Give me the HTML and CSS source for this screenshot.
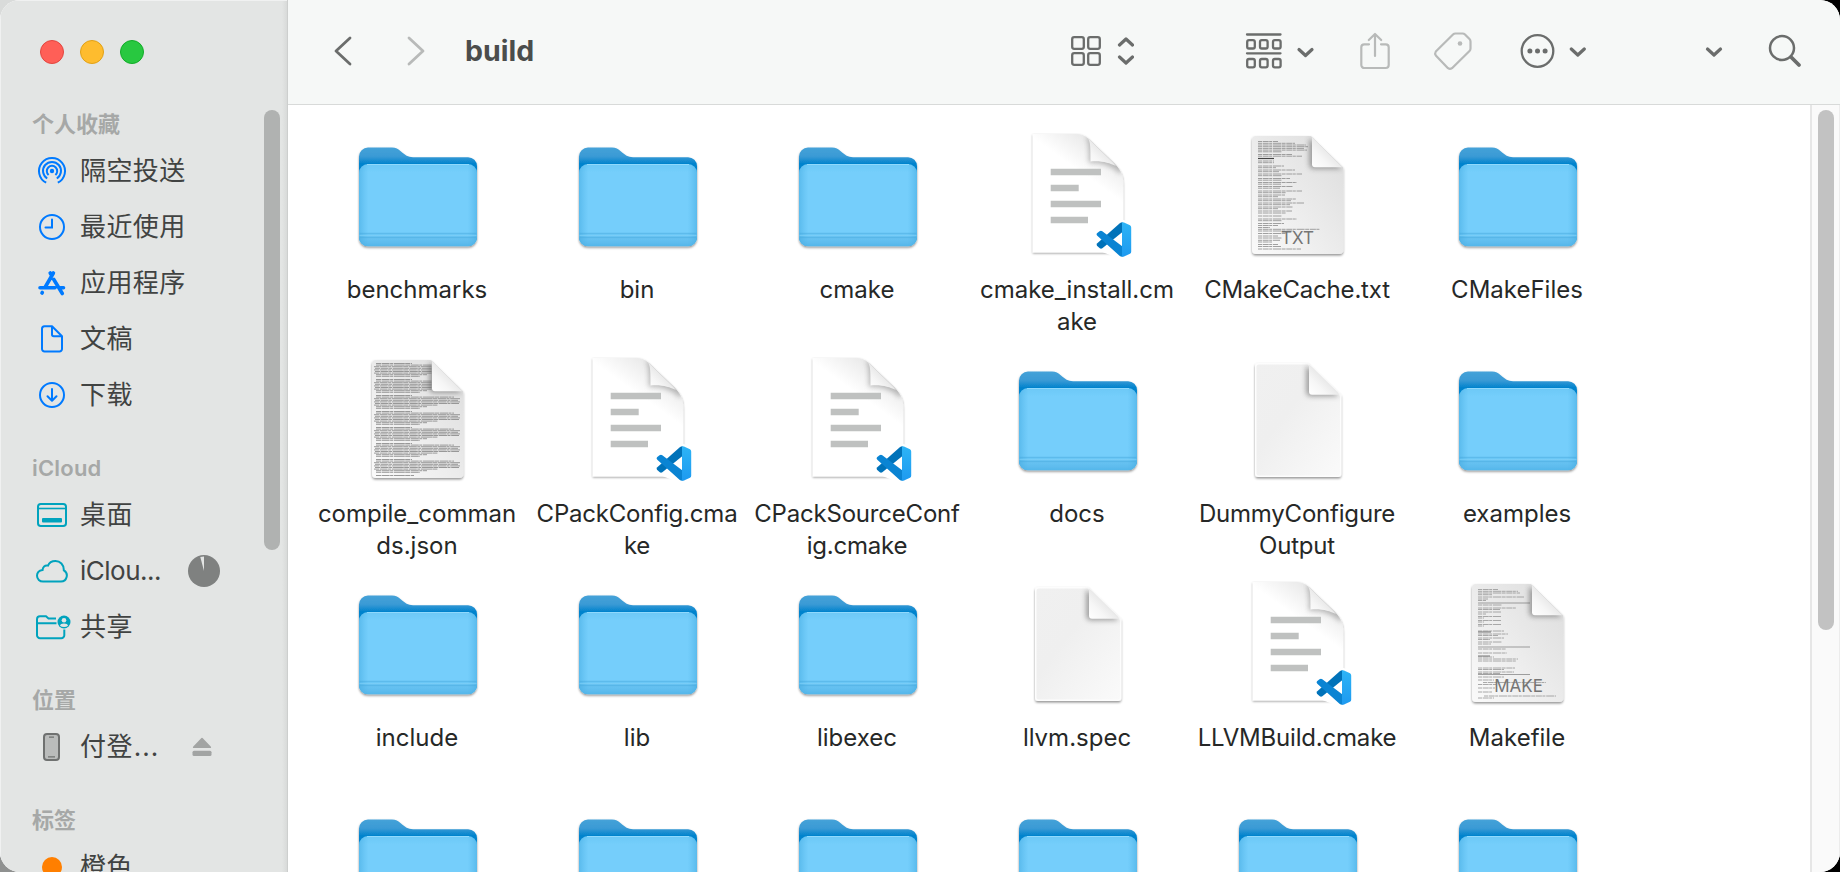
FILE: index.html
```html
<!DOCTYPE html>
<html lang="zh-CN">
<head>
<meta charset="utf-8">
<title>build</title>
<link rel="stylesheet" href="styles.css">
</head>
<body>
<svg class="defs" width="0" height="0" aria-hidden="true">
  <defs>
    <linearGradient id="gBack" x1="0" y1="0" x2="0" y2="1"><stop offset="0" stop-color="#45a2d8"/><stop offset=".09" stop-color="#3a9ad5"/><stop offset=".165" stop-color="#0083cd"/><stop offset="1" stop-color="#0083cd"/></linearGradient>
    <linearGradient id="gFront" x1="0" y1="0" x2="0" y2="1"><stop offset="0" stop-color="#6cc8f6"/><stop offset=".1" stop-color="#74cefb"/><stop offset=".84" stop-color="#74cefb"/><stop offset=".9" stop-color="#68c3f2"/><stop offset="1" stop-color="#55b6ea"/></linearGradient>
    <linearGradient id="gSide" x1="0" y1="0" x2="1" y2="0"><stop offset="0" stop-color="#3ea7de" stop-opacity=".5"/><stop offset=".08" stop-color="#4ab0e6" stop-opacity="0"/><stop offset=".92" stop-color="#4ab0e6" stop-opacity="0"/><stop offset="1" stop-color="#3ea7de" stop-opacity=".5"/></linearGradient>
    <linearGradient id="gDoc" x1="0" y1="0" x2="1" y2="1"><stop offset="0" stop-color="#f0f0f0"/><stop offset=".4" stop-color="#efefef"/><stop offset="1" stop-color="#fafafa"/></linearGradient>
    <linearGradient id="gText" x1="0" y1="1" x2="1" y2="0"><stop offset="0" stop-color="#fafafa"/><stop offset=".6" stop-color="#e8e8e8"/><stop offset="1" stop-color="#dcdcdc"/></linearGradient>
    <linearGradient id="gCurl" x1="0" y1="1" x2=".6" y2=".4"><stop offset="0" stop-color="#fff"/><stop offset=".5" stop-color="#f6f6f6"/><stop offset="1" stop-color="#e4e4e4"/></linearGradient>
    <linearGradient id="gPage" x1=".2" y1="1" x2=".75" y2="0"><stop offset="0" stop-color="#fff"/><stop offset=".66" stop-color="#fff"/><stop offset="1" stop-color="#e2e2e2"/></linearGradient>
    <linearGradient id="gCode" x1="0" y1="0" x2="0" y2="1"><stop offset="0" stop-color="#2db4f6"/><stop offset="1" stop-color="#1e9af0"/></linearGradient>
    <filter id="fShadow" x="-10%" y="-10%" width="120%" height="125%"><feDropShadow dx="0" dy="1.5" stdDeviation="1.2" flood-color="#000" flood-opacity=".42"/></filter>
    <filter id="fSoft" x="-10%" y="-10%" width="120%" height="125%"><feDropShadow dx="0" dy="1" stdDeviation="1" flood-color="#000" flood-opacity=".4"/></filter>
    <filter id="fBlur" x="-40%" y="-40%" width="180%" height="180%"><feGaussianBlur stdDeviation="2.6"/></filter>
    <clipPath id="cDoc"><path d="M22 6H77L109 37.500V120a4 4 0 0 1-4 4H22a4 4 0 0 1-4-4V10a4 4 0 0 1 4-4Z"/></clipPath>
    <clipPath id="cBlank"><path d="M25 9H74L107 41V120a3 3 0 0 1-3 3H24a3 3 0 0 1-3-3V12a3 3 0 0 1 4-3Z"/></clipPath>
    <clipPath id="cPage"><path d="M18.700 4H62C70 4 74 8 78 12L100 33C106 39 109.300 44 109.300 54V122.500H18.700Z"/></clipPath>
    <clipPath id="cLines"><path d="M18 6H77.500V37.500H109V124H18Z"/></clipPath>

    <symbol id="folder" viewBox="0 0 128 128">
      <g filter="url(#fShadow)">
        <path fill="url(#gBack)" d="M5 26.500a9 9 0 0 1 9-9H38c4 0 6 1.500 9 4C51 25 54 27.200 59 27.200H114a9 9 0 0 1 9 9V107a9 9 0 0 1-9 9H14a9 9 0 0 1-9-9Z"/>
        <rect x="5" y="34" width="118" height="82.300" rx="9" fill="url(#gFront)"/>
      </g>
      <rect x="5" y="34" width="118" height="82.300" rx="9" fill="url(#gSide)"/>
      <path d="M13 34.500H115" stroke="#8fd9fd" stroke-width="1"/>
      <path d="M5.500 103.500H122.500M5.500 107.500H122.500" stroke="#48aadf" stroke-width="1.300" opacity=".5"/>
      <path d="M5.500 105.500H122.500" stroke="#7fd0f7" stroke-width="1" opacity=".6"/>
    </symbol>

    <symbol id="code-page" viewBox="0 0 128 128">
      <path filter="url(#fSoft)" fill="url(#gPage)" d="M18.700 4H62C70 4 74 8 78 12L100 33C106 39 109.300 44 109.300 54V122.500H18.700Z"/>
      <g clip-path="url(#cPage)"><path filter="url(#fBlur)" fill="#888" opacity=".55" d="M72 6C75 12 75 20 75 33C88 32 98 36 106 44L110 36L90 12Z"/></g>
      <path fill="url(#gCurl)" d="M74 8.500C76.500 12 76.500 18 76.500 31.500C88 30.500 95 33 102 36L99 32.500L78.500 12.500Z"/>
      <path fill="#bfc1c0" d="M36.700 38.700H87V45.300H36.700ZM36.700 54.700H64.700V61.300H36.700ZM36.700 70.700H87V77.300H36.700ZM36.700 86.700H74V93.300H36.700Z"/>
      <path fill="#fff" stroke="#fff" stroke-width="5.500" stroke-linejoin="round" d="M82.500 103L88 101L108 92.300L117 95.500V123L108 126.700L88 119L82.500 115Z"/>
      <path fill="#0072b9" d="M108.500 92.300V102L88.300 118.200Q87 119.200 85.500 118L83 115.800Q82 114.500 83.300 113.200L105.500 93.500Q107 92.300 108.500 92.300Z"/>
      <path fill="#0a84d3" d="M108.500 126.700V116.500L88.300 101.300Q87 100.300 85.500 101.300L83 103.300Q82 104.500 83.300 105.800L105.500 125.800Q107 126.900 108.500 126.700Z"/>
      <path fill="url(#gCode)" d="M108 92.300Q108.800 92 110 92.600L116 95.300Q117.200 96 117.200 97.500V121.700Q117.200 123 116 123.800L110 126.500Q108.800 127 108 126.700Z"/>
    </symbol>

    <symbol id="text-page" viewBox="0 0 128 128">
      <path filter="url(#fShadow)" fill="url(#gText)" d="M22 6H77L109.300 37.500V120a4 4 0 0 1-4 4H22a4 4 0 0 1-4-4V10a4 4 0 0 1 4-4Z"/>
    </symbol>
    <symbol id="curl" viewBox="0 0 128 128">
      <path filter="url(#fBlur)" fill="#555" opacity=".5" d="M76 8L108 39H80Q75 39 75 33V12Z"/>
      <path fill="url(#gCurl)" d="M78 7L108.500 37.300H81a3 3 0 0 1-3-3Z"/>
    </symbol>
    <symbol id="blank-page" viewBox="0 0 128 128">
      <path filter="url(#fShadow)" fill="#fdfdfd" d="M24 9H74L107.300 41V120a3 3 0 0 1-3 3H24a3 3 0 0 1-3-3V12a3 3 0 0 1 3-3Z"/>
      <path fill="url(#gDoc)" d="M25 10.500H73.500L106 42V119.500a2 2 0 0 1-2 2H24.500a2 2 0 0 1-2-2V13a2.500 2.500 0 0 1 2.500-2.500Z"/>
      <g clip-path="url(#cBlank)"><use href="#curl" x="-3" y="3.500" width="128" height="128"/></g>
    </symbol>

    <symbol id="txt-lines" viewBox="0 0 128 128">
      <g fill="none" stroke="#8a8a8a" stroke-width=".8" stroke-dasharray="4 .7 6 .5 3 .8 8 .6">
        <path d="M24 11.500H44M24 13.300H61M24 15H72M24 16.700H74M24 18.400H70M24 20.100H73M24 21.800H48M24 24.500H58M24 26.200H68M24 31H40M24 32.700H40"/>
        <path d="M24 36H50M24 37.700H42M24 40H61M24 41.700H45M24 44H68M24 45.700H48M24 48.500H56M24 50.200H48M24 52.500H63M24 54.200H47M24 56.500H59M24 58.200H46M24 61H68M24 62.700H52M24 65H51M24 66.700H44"/>
        <path d="M24 69H62M24 70.700H57M24 73H70M24 74.700H56M24 77H59M24 78.700H44M24 81H58M24 83H52M24 86H48M24 89H63M24 90.700H48M24 93.500H50M24 95.500H44M24 97.500H36M24 99.300H86M24 101H60M24 103.500H52"/>
        <path d="M24 106H44M24 108H48M24 110.300H46M24 112H38M24 114.500H44M24 116.500H47M24 119H67"/>
      </g>
      <path d="M24 28.500H40" stroke="#444" stroke-width="1.200"/>
    </symbol>
  </defs>
</svg>

<div class="desktop">
<div class="window">
  <aside class="sidebar">
    <div class="lights"><i class="light red"></i><i class="light yellow"></i><i class="light green"></i></div>
    <h2 class="group">个人收藏</h2>
    <ul class="list blue">
      <li class="row"><svg class="glyph" viewBox="0 0 32 32"><g fill="none" stroke="currentColor" stroke-width="2"><path d="M10.200 27.700A13 13 0 1 1 21.800 27.700"/><path d="M11.200 23.500A9 9 0 1 1 20.800 23.500" /><path d="M12.600 20A5.200 5.200 0 1 1 19.400 20"/></g><circle cx="16" cy="16" r="2.200" fill="currentColor"/></svg><span>隔空投送</span></li>
      <li class="row"><svg class="glyph" viewBox="0 0 32 32"><g fill="none" stroke="currentColor" stroke-width="2" stroke-linecap="round"><circle cx="16" cy="16" r="12"/><path d="M16 8.500V16.500H9.500"/></g></svg><span>最近使用</span></li>
      <li class="row"><svg class="glyph" viewBox="0 0 32 32"><g fill="none" stroke="currentColor" stroke-width="3.600" stroke-linecap="round"><path d="M17.400 6L9 20.500M14.200 6L15.700 8.600M17.800 12.500L26.300 26.500M4 20.800H19M24.500 20.800H27.500M6.300 25.500L6 26"/></g></svg><span>应用程序</span></li>
      <li class="row"><svg class="glyph" viewBox="0 0 32 32"><g fill="none" stroke="currentColor" stroke-width="2" stroke-linejoin="round"><path d="M8.500 3.300H16L26 13.300V26a2.500 2.500 0 0 1-2.500 2.500H8.500A2.500 2.500 0 0 1 6 26V5.800a2.500 2.500 0 0 1 2.500-2.500Z"/><path d="M16 3.500V11.500a1.800 1.800 0 0 0 1.800 1.800H26"/></g></svg><span>文稿</span></li>
      <li class="row"><svg class="glyph" viewBox="0 0 32 32"><g fill="none" stroke="currentColor" stroke-width="2" stroke-linecap="round" stroke-linejoin="round"><circle cx="16" cy="16" r="12"/><path d="M16 10V21.500M11.500 17.200L16 21.700L20.500 17.200"/></g></svg><span>下载</span></li>
    </ul>
    <h2 class="group latin">iCloud</h2>
    <ul class="list teal">
      <li class="row"><svg class="glyph" viewBox="0 0 32 32"><rect x="2" y="5" width="28" height="22" rx="2.800" fill="none" stroke="currentColor" stroke-width="2"/><path d="M2 9.500H30" stroke="currentColor" stroke-width="1.600"/><rect x="6" y="19" width="20" height="4.600" rx="1" fill="currentColor"/></svg><span>桌面</span></li>
      <li class="row"><svg class="glyph" viewBox="0 0 32 32"><path d="M7 26.500H25A6 6 0 0 0 27.800 15.300C28 9.500 24 6 19.500 6C15.500 6 13 8 12 10.600C8.800 9.900 6.600 12 6.600 15C3.500 15.500 1 17.500 1 20.800C1 24.200 3.800 26.500 7 26.500Z" fill="none" stroke="currentColor" stroke-width="2"/></svg><span class="latin">iClou...</span><svg class="pie" viewBox="0 0 32 32"><circle cx="16" cy="16" r="16"/><path d="M16 16L12.300 2A14.500 14.500 0 0 1 16 1.500Z"/></svg></li>
      <li class="row"><svg class="glyph wide" viewBox="0 0 36 32"><g fill="none" stroke="currentColor" stroke-width="2"><path d="M20 7.500H12.500L10 5.300H4A3 3 0 0 0 1 8.300V24.200A3 3 0 0 0 4 27.200H25.300A3 3 0 0 0 28.300 24.200V18.500M1 12.200H20.500"/></g><circle cx="28" cy="11" r="6.500" fill="currentColor"/><circle cx="28" cy="9.200" r="2.300" fill="#e3e5e4"/><path d="M24 14.700Q24.500 12.500 28 12.500T32 14.700Q30.500 16 28 16T24 14.700Z" fill="#e3e5e4"/></svg><span>共享</span></li>
    </ul>
    <h2 class="group">位置</h2>
    <ul class="list">
      <li class="row"><svg class="glyph" viewBox="0 0 32 32"><rect x="8" y="3" width="15" height="26" rx="3" fill="#babcbb" stroke="#6f7170" stroke-width="2"/><path d="M13 6.200H18M12 25.800H19" stroke="#6f7170" stroke-width="1.300"/></svg><span>付登<b class="dots">...</b></span><svg class="eject" viewBox="0 0 20 20"><path d="M10 .8Q10.500 .8 11.300 1.700L18.500 9.200Q20 11 18 11H2Q0 11 1.500 9.200L8.700 1.700Q9.500 .8 10 .8Z"/><rect x=".5" y="13.700" width="19" height="5.300" rx="1.500"/></svg></li>
    </ul>
    <h2 class="group">标签</h2>
    <ul class="list">
      <li class="row"><i class="dot"></i><span>橙色</span></li>
    </ul>
    <div class="side-thumb"></div>
  </aside>

  <main class="main">
    <header class="toolbar">
      <svg class="tool nav-back" viewBox="0 0 20 30"><path d="M17 2L3 15L17 28" /></svg>
      <svg class="tool nav-next dim" viewBox="0 0 20 30"><path d="M3 2L17 15L3 28"/></svg>
      <h1 class="title">build</h1>
      <svg class="tool view" viewBox="0 0 64 32"><g stroke-width="2.300"><rect x="2.200" y="2.200" width="11.600" height="11.600" rx="2"/><rect x="18.200" y="2.200" width="11.600" height="11.600" rx="2"/><rect x="2.200" y="18.200" width="11.600" height="11.600" rx="2"/><rect x="18.200" y="18.200" width="11.600" height="11.600" rx="2"/></g><path stroke-width="3.200" d="M49.500 10L56 4L62.500 10M49.500 22L56 28L62.500 22"/></svg>
      <svg class="tool arrange" viewBox="0 0 70 36"><g stroke-width="2.300"><path d="M2 1.500H35.500M2 20.300H35.500"/><rect x="2.200" y="7.200" width="7.600" height="8.300" rx="1.800"/><rect x="15" y="7.200" width="7.600" height="8.300" rx="1.800"/><rect x="28" y="7.200" width="7.600" height="8.300" rx="1.800"/><rect x="2.200" y="26" width="7.600" height="8.300" rx="1.800"/><rect x="15" y="26" width="7.600" height="8.300" rx="1.800"/><rect x="28" y="26" width="7.600" height="8.300" rx="1.800"/></g><path stroke-width="3.200" d="M54 16.500L60.500 22.500L67 16.500"/></svg>
      <svg class="tool share dim" viewBox="0 0 32 38"><path stroke-width="2.200" d="M10 12.300H5.300A3 3 0 0 0 2.300 15.300V33A3 3 0 0 0 5.300 36H26.700A3 3 0 0 0 29.700 33V15.300A3 3 0 0 0 26.700 12.300H22M16 24V2.500M9.800 8L16 2L22.200 8"/></svg>
      <svg class="tool tag dim" viewBox="0 0 40 40"><path stroke-width="2.200" d="M22.500 2.500H29.500Q31 2.500 32 3.500L36.500 8Q37.500 9 37.500 10.500V17.500Q37.500 19 36.500 20L19 37.200Q17 38.500 15 37.200L2.800 24.500Q1.500 22.500 2.800 20.500L20 3.500Q21 2.500 22.500 2.500Z"/><circle cx="27" cy="12.500" r="2.300" fill="currentColor" stroke="none"/></svg>
      <svg class="tool more" viewBox="0 0 66 36"><circle cx="17.500" cy="18" r="15.800" stroke-width="2.300"/><g fill="currentColor" stroke="none"><circle cx="9.900" cy="18" r="2.500"/><circle cx="17.500" cy="18" r="2.500"/><circle cx="25.100" cy="18" r="2.500"/></g><path stroke-width="3.200" d="M51.300 16L57.800 22L64.300 16"/></svg>
      <svg class="tool drop" viewBox="0 0 18 36"><path stroke-width="3.200" d="M2.500 16L9 22L15.500 16"/></svg>
      <svg class="tool search" viewBox="0 0 34 34"><circle cx="14" cy="14" r="12" stroke-width="2.500"/><path stroke-width="3.800" d="M23.500 23.500L31 31"/></svg>
    </header>
    <div class="content">
      <section class="files">
        <figure class="file"><svg class="icon"><use href="#folder"/></svg><figcaption>benchmarks</figcaption></figure>
        <figure class="file"><svg class="icon"><use href="#folder"/></svg><figcaption>bin</figcaption></figure>
        <figure class="file"><svg class="icon"><use href="#folder"/></svg><figcaption>cmake</figcaption></figure>
        <figure class="file"><svg class="icon"><use href="#code-page"/></svg><figcaption>cmake_install.cm<br>ake</figcaption></figure>
        <figure class="file"><svg class="icon" viewBox="0 0 128 128"><use href="#text-page"/><use href="#txt-lines"/><g clip-path="url(#cDoc)"><use href="#curl"/></g><text x="63.500" y="114" class="badge">TXT</text></svg><figcaption class="tight">CMakeCache.txt</figcaption></figure>
        <figure class="file"><svg class="icon"><use href="#folder"/></svg><figcaption>CMakeFiles</figcaption></figure>

        <figure class="file"><svg class="icon" viewBox="0 0 128 128"><use href="#text-page"/>
          <g clip-path="url(#cLines)" fill="none" stroke="#8e8e8e" stroke-width=".9" stroke-dasharray="5 .6 8 .5 3 .7 11 .4"><path id="jsonBlock" d="M22 9.500H58M22 11.100H100M20 12.700H106M21 14.300H104M20 15.900H106M21 17.500H105M20 19.100H84M22 20.700H73M22 22.300H66"/><use href="#jsonBlock" y="16"/><use href="#jsonBlock" y="32"/><use href="#jsonBlock" y="48"/><use href="#jsonBlock" y="64"/><use href="#jsonBlock" y="80"/><use href="#jsonBlock" y="96"/><path d="M22 121.500H60"/></g>
          <g clip-path="url(#cDoc)"><use href="#curl"/></g></svg><figcaption>compile_comman<br>ds.json</figcaption></figure>
        <figure class="file"><svg class="icon"><use href="#code-page"/></svg><figcaption class="tight">CPackConfig.cma<br>ke</figcaption></figure>
        <figure class="file"><svg class="icon"><use href="#code-page"/></svg><figcaption class="tight">CPackSourceConf<br>ig.cmake</figcaption></figure>
        <figure class="file"><svg class="icon"><use href="#folder"/></svg><figcaption>docs</figcaption></figure>
        <figure class="file"><svg class="icon"><use href="#blank-page"/></svg><figcaption class="tight">DummyConfigure<br>Output</figcaption></figure>
        <figure class="file"><svg class="icon"><use href="#folder"/></svg><figcaption>examples</figcaption></figure>

        <figure class="file"><svg class="icon"><use href="#folder"/></svg><figcaption>include</figcaption></figure>
        <figure class="file"><svg class="icon"><use href="#folder"/></svg><figcaption>lib</figcaption></figure>
        <figure class="file"><svg class="icon"><use href="#folder"/></svg><figcaption>libexec</figcaption></figure>
        <figure class="file"><svg class="icon"><use href="#blank-page"/></svg><figcaption>llvm.spec</figcaption></figure>
        <figure class="file"><svg class="icon"><use href="#code-page"/></svg><figcaption class="tight">LLVMBuild.cmake</figcaption></figure>
        <figure class="file"><svg class="icon" viewBox="0 0 128 128"><use href="#text-page"/>
          <g fill="none" stroke="#959595" stroke-width=".8" stroke-dasharray="4 .7 6 .5 3 .8 8 .6"><path d="M24 11.500H44M24 13.300H64M24 15H66M24 16.700H38M24 19H70M24 21H34M24 22.500H32M24 27H48M24 30H62M24 31.500H46M24 34H47M24 36H32M24 38.500H47M24 40H30M24 42.500H47M24 44H30M24 46.500H47M24 48H30M24 53H50M24 56H54M24 57.500H44M24 60H50M24 61.500H36M24 64H48M24 66H37M24 71H52M24 75H53M24 79H40M24 81H64M24 83H62M24 90H61M24 91.500H50M24 94H60M24 95.500H46M24 99H50M24 102H40M29 104.500H92M24 106.500H42M24 110H41M24 114H38M30 118H102M24 120H40"/></g><path d="M24 25H76M24 69H76M24 96.500H76" stroke="#666" stroke-width=".6"/><path d="M24 54H37M24 78H36" stroke="#555" stroke-width=".8"/>
          <g clip-path="url(#cDoc)"><use href="#curl"/></g><text x="64.500" y="114" class="badge">MAKE</text></svg><figcaption>Makefile</figcaption></figure>

        <figure class="file"><svg class="icon"><use href="#folder"/></svg></figure>
        <figure class="file"><svg class="icon"><use href="#folder"/></svg></figure>
        <figure class="file"><svg class="icon"><use href="#folder"/></svg></figure>
        <figure class="file"><svg class="icon"><use href="#folder"/></svg></figure>
        <figure class="file"><svg class="icon"><use href="#folder"/></svg></figure>
        <figure class="file"><svg class="icon"><use href="#folder"/></svg></figure>
      </section>
      <div class="scroll-track"><div class="scroll-thumb"></div></div>
    </div>
  </main>
</div>
</div>
</body>
</html>
```
FILE: styles.css
```css
* { box-sizing: border-box; }
body, h1, h2, ul, figure { margin: 0; padding: 0; }
body { overflow: hidden; font-family: Inter, "Noto Sans CJK SC", sans-serif; }
.defs { position: absolute; }
.desktop { width: 1840px; height: 872px; background: linear-gradient(90deg, transparent 50%, #000 50%), linear-gradient(#d9dbda 50%, #8f9190 50%); }
.window { display: flex; width: 1840px; height: 872px; border-radius: 20px; overflow: hidden; background: #fff; }

.sidebar { position: relative; flex: 0 0 288px; height: 872px; overflow: hidden; background: linear-gradient(90deg, #e3e5e4 282px, #d8dad9); border-right: 1px solid #cdcfce; box-shadow: inset 1px 1px 0 #f0f1f1; }
.lights { display: flex; gap: 16px; padding: 40px 0 0 40px; height: 106px; }
.light { width: 24px; height: 24px; border-radius: 50%; }
.red { background: #ff5f57; border: 1px solid #e2463f; }
.yellow { background: #febc2e; border: 1px solid #e1a116; }
.green { background: #28c840; border: 1px solid #12ac28; }
.group { height: 36px; line-height: 36px; padding-left: 32px; font-size: 22px; font-weight: 700; color: #a6a8a7; }
.group.latin { font-weight: 600; letter-spacing: .2px; }
.list { list-style: none; padding-top: 1px; margin-bottom: 27px; color: #737574; }
.blue { color: #007aff; }
.teal { color: #00a3bd; }
.row { display: flex; align-items: center; height: 56px; padding-left: 36px; }
.row span { flex: 0 0 100px; margin-left: 12px; font-size: 26px; line-height: 36px; letter-spacing: .4px; white-space: nowrap; color: #414342; }
.row .latin { letter-spacing: -.5px; }
.dots { font-weight: 400; letter-spacing: 1px; margin-left: 1px; }
.glyph { flex: 0 0 32px; height: 32px; }
.glyph.wide { flex-basis: 36px; margin-right: -4px; }
.pie { width: 32px; height: 32px; margin-left: 8px; fill: #7f8180; }
.pie path { fill: #e3e5e4; }
.eject { width: 20px; height: 20px; margin-left: 12px; fill: #a2a4a3; }
.dot { width: 20px; height: 20px; margin: 0 6px; border-radius: 50%; background: #ff7f00; }
.side-thumb { position: absolute; right: 7px; top: 110px; width: 16px; height: 440px; border-radius: 8px; background: #b0b2b1; }

.main { flex: 1; display: flex; flex-direction: column; min-width: 0; }
.toolbar { display: flex; align-items: center; height: 105px; padding: 0 0 2px 45px; background: #f6f8f7; border-bottom: 1px solid #d8dad9; color: #6b6d6c; }
.tool { flex: none; fill: none; stroke: currentColor; stroke-width: 2.8; stroke-linecap: round; stroke-linejoin: round; }
.dim { color: #b8bab9; }
.nav-back { width: 20px; height: 30px; }
.nav-next { width: 20px; height: 30px; margin-left: 53px; }
.title { width: 605px; margin-left: 39px; font-size: 28.5px; line-height: 36px; font-weight: 700; color: #4b4d4c; }
.view { width: 64px; height: 32px; }
.arrange { width: 70px; height: 36px; margin-left: 111px; }
.share { width: 32px; height: 38px; margin-left: 44px; }
.tag { width: 40px; height: 40px; margin-left: 42px; }
.more { width: 66px; height: 36px; margin-left: 47px; }
.drop { width: 18px; height: 36px; margin-left: 119px; }
.search { width: 34px; height: 34px; margin-left: 45px; }

.content { flex: 1; display: flex; min-height: 0; }
.files { flex: 1; display: grid; grid-template-columns: repeat(6, 220px); grid-auto-rows: 224px; align-content: start; padding: 25px 0 0 20px; overflow: hidden; }
.file { display: flex; flex-direction: column; align-items: center; }
.icon { width: 128px; height: 128px; }
figcaption { margin: 16px 2px 0 0; text-align: center; white-space: nowrap; font-size: 24px; line-height: 32px; color: #262827; }
.tight { letter-spacing: -.2px; }
.badge { font: 17px Inter, sans-serif; text-anchor: middle; fill: #757575; }
.scroll-track { flex: 0 0 30px; padding: 5px 0 0 6px; background: #fafafa; border-left: 2px solid #e6e6e6; border-right: 1px solid #ececec; }
.scroll-thumb { width: 16px; height: 520px; border-radius: 8px; background: #c2c2c2; }
```
